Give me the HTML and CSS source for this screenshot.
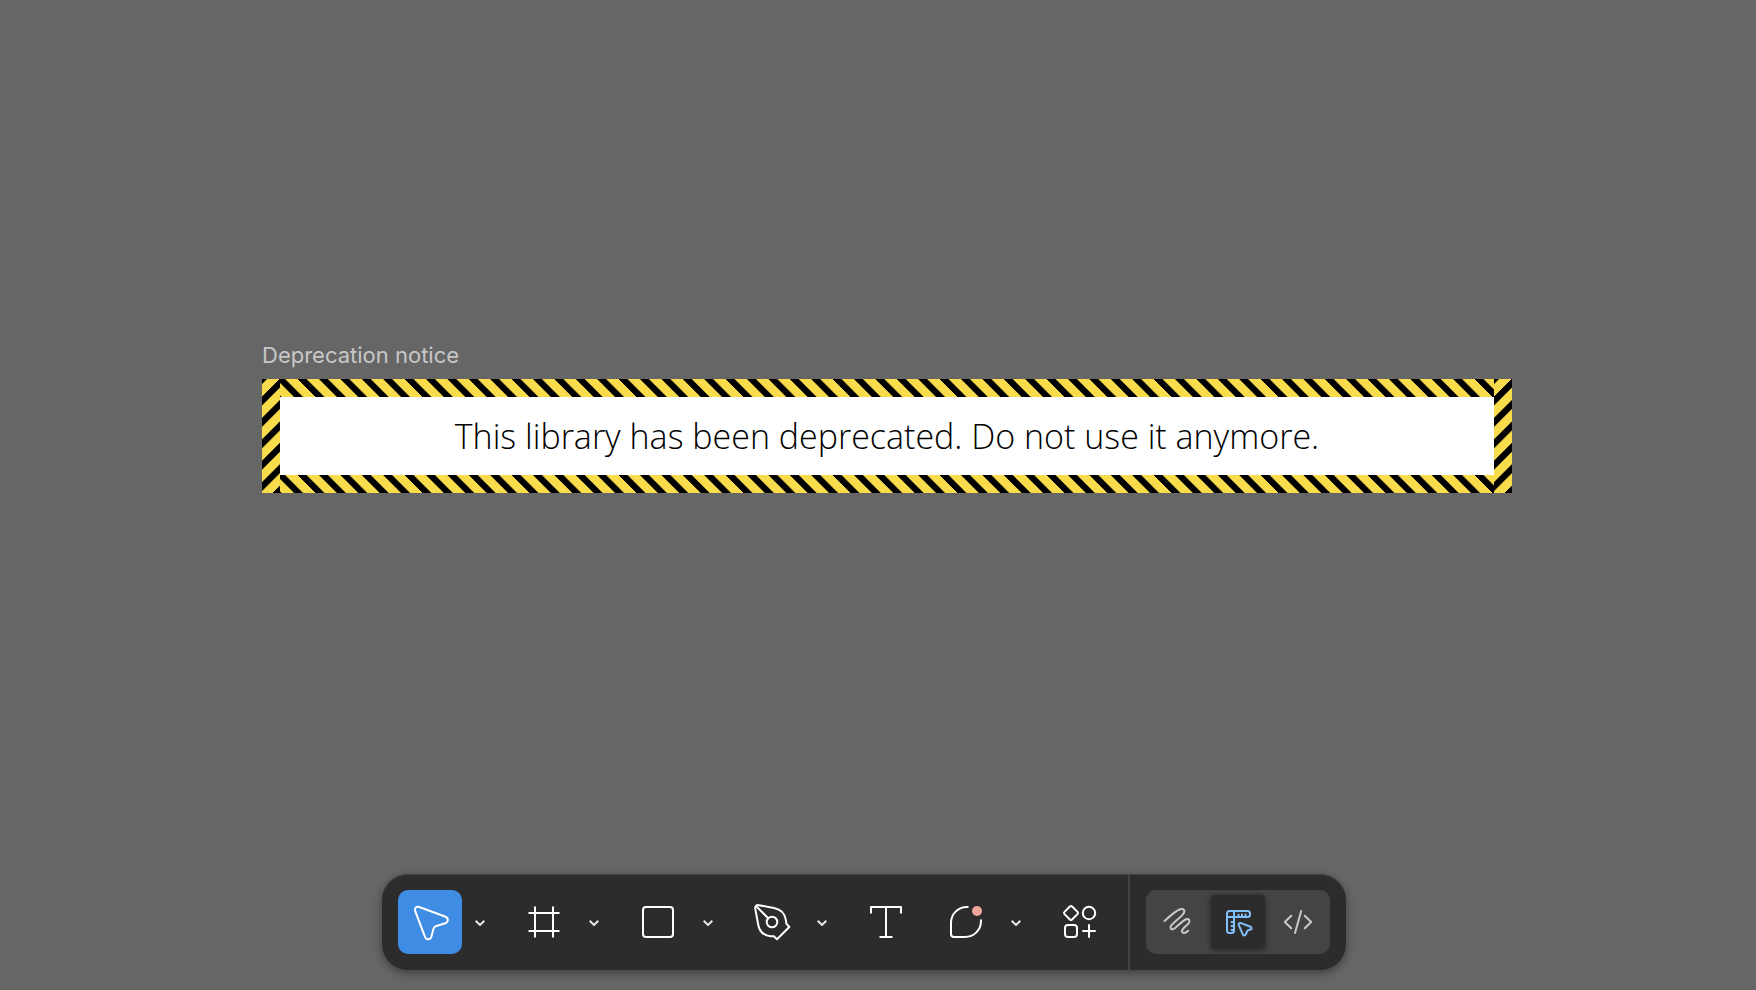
FILE: index.html
```html
<!DOCTYPE html>
<html lang="en">
<head>
<meta charset="utf-8">
<title>Deprecation notice</title>
<link rel="stylesheet" href="styles.css">
</head>
<body>
<main class="canvas">
  <section class="frame">
    <h1 class="frame-label">Deprecation notice</h1>
    <div class="notice">
      <svg class="tape-side" aria-hidden="true">
        <defs>
          <pattern id="stripe-down" width="21.4" height="40" patternUnits="userSpaceOnUse" patternTransform="translate(17.5 0) skewX(45)"><rect width="9" height="40" fill="#000"/></pattern>
          <pattern id="stripe-up" width="40" height="21.4" patternUnits="userSpaceOnUse" patternTransform="translate(0 17.5) skewY(-45)"><rect width="40" height="9" fill="#000"/></pattern>
        </defs>
        <rect width="100%" height="100%" fill="url(#stripe-up)"/>
      </svg>
      <div class="notice-body">
        <svg class="tape" aria-hidden="true"><rect width="100%" height="100%" fill="url(#stripe-down)"/></svg>
        <p class="notice-text">This library has been deprecated. Do not use it anymore.</p>
        <svg class="tape" aria-hidden="true"><rect width="100%" height="100%" fill="url(#stripe-down)"/></svg>
      </div>
      <svg class="tape-side" aria-hidden="true"><rect width="100%" height="100%" fill="url(#stripe-up)"/></svg>
    </div>
  </section>
</main>
<footer class="dock">
  <div class="toolbar" role="toolbar" aria-label="Design tools">
    <div class="tools">
      <div class="tool-group">
        <button class="tool active" aria-label="Move"><svg class="icon" viewBox="0 0 64 64"><path d="M17.2 21.2C16 18.2 18.4 16 21.2 17L47.6 26.8C50.6 28 50.4 32.2 47.4 33.2L38.2 36Q36.2 36.6 35.6 38.6L33.3 47C32.4 50 28.3 50.2 27.1 47.2Z"/></svg></button>
        <button class="more" aria-label="Move options"><svg class="icon" viewBox="0 0 32 64"><path d="M11.7 30.7L16 35L20.3 30.7"/></svg></button>
      </div>
      <div class="tool-group">
        <button class="tool" aria-label="Frame"><svg class="icon" viewBox="0 0 64 64"><path d="M23 16.5V47.5M41 16.5V47.5M16.5 23H47.5M16.5 41H47.5"/></svg></button>
        <button class="more" aria-label="Frame options"><svg class="icon" viewBox="0 0 32 64"><path d="M11.7 30.7L16 35L20.3 30.7"/></svg></button>
      </div>
      <div class="tool-group">
        <button class="tool" aria-label="Rectangle"><svg class="icon" viewBox="0 0 64 64"><rect x="17" y="17" width="30" height="30" rx="3"/></svg></button>
        <button class="more" aria-label="Shape options"><svg class="icon" viewBox="0 0 32 64"><path d="M11.7 30.7L16 35L20.3 30.7"/></svg></button>
      </div>
      <div class="tool-group">
        <button class="tool" aria-label="Pen"><svg class="icon" viewBox="0 0 64 64"><path d="M15.2 18.4C15 16.2 16.6 14.8 18.8 15.2L34 17.9C41 19.2 45.2 24 46 30.5L46.3 33.6L49.3 37L37 49.3L33.8 46.2H30.5C23.5 45.6 19.4 41.6 18.2 34.5ZM16.6 16.6L28.2 28.2"/><circle cx="32" cy="32" r="5.3"/></svg></button>
        <button class="more" aria-label="Pen options"><svg class="icon" viewBox="0 0 32 64"><path d="M11.7 30.7L16 35L20.3 30.7"/></svg></button>
      </div>
      <button class="tool" aria-label="Text"><svg class="icon" viewBox="0 0 64 64"><path d="M17 23.500V17H47V23.500M32 17V47M25.500 47H38.500"/></svg></button>
      <div class="tool-group">
        <button class="tool" aria-label="Comment"><svg class="icon" viewBox="0 0 64 64"><path d="M34.5 17H33C24 17 17 24 17 33V44A3 3 0 0 0 20 47H31C40 47 47 40 47 31V29.500"/><circle class="alert" cx="43" cy="21" r="5"/></svg></button>
        <button class="more" aria-label="Comment options"><svg class="icon" viewBox="0 0 32 64"><path d="M11.7 30.7L16 35L20.3 30.7"/></svg></button>
      </div>
      <button class="tool" aria-label="Actions"><svg class="icon" viewBox="0 0 64 64"><path d="M21.9 16.5Q23 15.4 24.1 16.5L29.5 21.9Q30.6 23 29.5 24.1L24.1 29.5Q23 30.6 21.9 29.5L16.5 24.1Q15.4 23 16.5 21.9Z"/><circle cx="41" cy="23" r="6.2"/><rect x="17" y="35" width="12" height="12" rx="3"/><path d="M41 34.300V47.700M34.300 41H47.700"/></svg></button>
    </div>
    <div class="modes" role="group" aria-label="Mode">
      <div class="mode-track">
        <button class="mode" aria-label="Draw"><svg class="icon" viewBox="0 0 56 56"><path d="M14.5 27C20 22 25.500 17 30 15.300C33.500 14 35.500 16.500 33.500 19.500C30.500 24 22 29 20.800 32.200C19.800 35 22 36.300 24.500 34.500C28.500 31.500 32 27 36.200 25.300C39 24.300 40.300 26.600 38.800 29C37 31.800 32.500 34 32 36.800C31.700 39.700 36 39.500 38.200 36.700"/></svg></button>
        <button class="mode selected" aria-label="Design" aria-pressed="true"><svg class="icon" viewBox="0 0 56 56"><path d="M24 36.500V23H37.500A2.500 2.500 0 0 0 40 20.500V19.500A2.500 2.500 0 0 0 37.500 17H19.500A2.500 2.500 0 0 0 17 19.500V36.500A2.500 2.500 0 0 0 19.500 39H21.500A2.500 2.500 0 0 0 24 36.500M17 23H24V17M28.500 22V20.500M32 22V20.500M35.500 22V20.500M23 28H21.500M23 32H21.500M23 36H21.500"/><path d="M28.800 31.200C28.200 29.600 29.600 28.600 31 29.100L40.500 32.800C42 33.400 42 35 40.500 35.500L37.500 36.600L35.700 40.500C35 42 33.300 41.800 32.800 40.400Z"/></svg></button>
        <button class="mode" aria-label="Dev Mode"><svg class="icon" viewBox="0 0 56 56"><path d="M21.300 21.700L14.800 28L21.300 34.300M34.700 21.700L41.200 28L34.700 34.300M31.200 17L25 39"/></svg></button>
      </div>
    </div>
  </div>
</footer>
</body>
</html>
```
FILE: styles.css
```css
* {
  box-sizing: border-box;
}

body {
  margin: 0;
  min-height: 100vh;
  display: flex;
  flex-direction: column;
  background: #666;
  font-family: Inter, "Liberation Sans", sans-serif;
}

.canvas {
  flex: 1;
  padding: 341px 244px 0 262px;
}

.frame-label {
  margin: 0 0 10px;
  font-size: 22px;
  line-height: 28px;
  font-weight: 400;
  color: #c8c8c8;
}

.notice {
  display: flex;
  background: #fff;
}

.notice-body {
  flex: 1;
}

.notice-text {
  margin: 0;
  padding: 15px 0;
  font-family: "Open Sans", "Noto Sans", sans-serif;
  font-size: 34px;
  line-height: 48px;
  font-weight: 300;
  text-align: center;
  color: #000;
}

.tape {
  display: block;
  width: 100%;
  height: 18px;
  background: #f8dc4c;
}

.tape-side {
  display: block;
  flex: none;
  width: 18px;
  height: auto;
  contain: size;
  background: #f8dc4c;
}

.dock {
  display: flex;
  justify-content: center;
  padding: 0 28px 20px 0;
}

.toolbar {
  display: flex;
  background: #2c2c2c;
  border-radius: 26px;
  box-shadow: 0 3px 10px rgba(0, 0, 0, 0.4), inset 0 1px 0 #444;
}

.tools {
  display: flex;
  gap: 16px;
  padding: 16px;
}

.tool-group {
  display: flex;
  gap: 2px;
}

button {
  padding: 0;
  border: 0;
  background: none;
  color: #fff;
}

.icon {
  display: block;
  width: 100%;
  height: 100%;
  fill: none;
  stroke: currentColor;
  stroke-width: 2;
  stroke-linejoin: round;
}

.tool {
  width: 64px;
  height: 64px;
  border-radius: 10px;
}

.active {
  background: #3f8ce4;
}

.more {
  width: 32px;
  height: 64px;
  color: #e6e6e6;
}

.alert {
  fill: #f0a799;
  stroke: none;
}

.modes {
  padding: 16px;
  border-left: 2px solid #444;
}

.mode-track {
  display: flex;
  gap: 4px;
  padding: 4px;
  background: #444;
  border-radius: 10px;
}

.mode {
  width: 56px;
  height: 56px;
  border-radius: 6px;
  color: #c9c9c9;
  stroke-linecap: round;
}

.selected {
  color: #82c0fa;
  background: #2c2c2c;
  box-shadow: 0 1px 4px rgba(0, 0, 0, 0.4), inset 0 0 1px 1px #383838;
}
```
